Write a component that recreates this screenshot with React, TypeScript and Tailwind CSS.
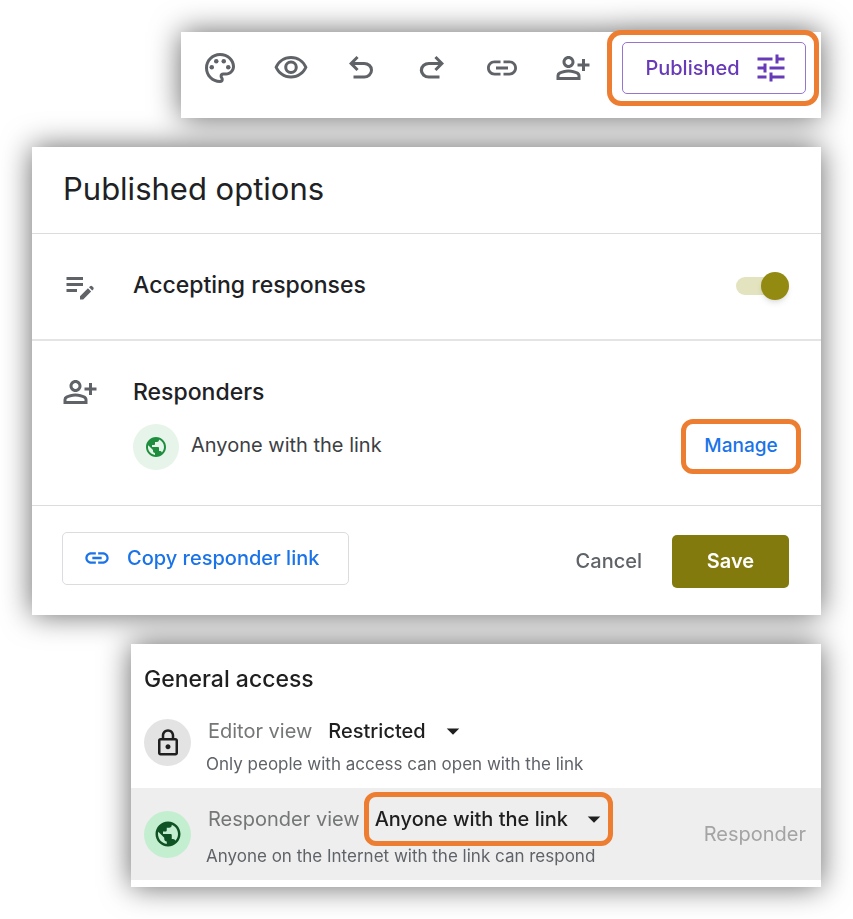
import { useState } from 'react';
import type { ReactNode } from 'react';
import {
  MdArrowDropDown,
  MdEditNote,
  MdLink,
  MdOutlineLock,
  MdOutlinePalette,
  MdOutlinePersonAddAlt,
  MdOutlineVisibility,
  MdPublic,
  MdTune,
} from 'react-icons/md';

function UndoIcon() {
  return (
    <svg viewBox="0 -960 960 960" className="size-9 fill-current">
      <path d="M280-200v-80h284q63 0 109.5-40T720-420q0-60-46.5-100T564-560H312l104 104-56 56-200-200 200-200 56 56-104 104h252q97 0 169.5 63T800-420q0 94-72.5 157T564-200H280Z" />
    </svg>
  );
}

function RedoIcon() {
  return (
    <svg viewBox="0 -960 960 960" className="size-9 fill-current">
      <path d="M396-200q-97 0-169.5-63T154-420q0-94 72.5-157T396-640h252L544-744l56-56 200 200-200 200-56-56 104-104H396q-63 0-109.5 40T240-420q0 60 46.5 100T396-280h284v80H396Z" />
    </svg>
  );
}

const tools = [
  { label: 'Customize theme', icon: <MdOutlinePalette className="size-9" /> },
  { label: 'Preview', icon: <MdOutlineVisibility className="size-9" /> },
  { label: 'Undo', icon: <UndoIcon /> },
  { label: 'Redo', icon: <RedoIcon /> },
  { label: 'Copy responder link', icon: <MdLink className="size-9" /> },
  { label: 'Share', icon: <MdOutlinePersonAddAlt className="size-9" /> },
];

function Highlight({ className = '', children }: { className?: string; children: ReactNode }) {
  return <div className={`shrink-0 border-5 border-[#ed7d31] ${className}`}>{children}</div>;
}

function Toolbar() {
  return (
    <header className="ml-[149px] bg-white pb-[14px]">
      <div className="flex h-[72px] items-center pl-[21px] pr-0.5">
        <div className="mr-4 flex flex-1 items-center justify-between text-[#5f6368]">
          {tools.map((tool) => (
            <button key={tool.label} aria-label={tool.label}>
              {tool.icon}
            </button>
          ))}
        </div>
        <Highlight className="rounded-[14px] py-[7px] pl-2.5 pr-2">
          <button className="flex h-[52px] w-[184px] items-center justify-center gap-[13px] rounded-[5px] border border-[#9575cd] pl-1.5 text-xl font-medium text-[#673ab7]">
            Published
            <MdTune className="size-9" />
          </button>
        </Highlight>
      </div>
    </header>
  );
}

function PublishedOptions() {
  const [accepting, setAccepting] = useState(true);

  return (
    <section className="bg-white">
      <h1 className="border-b border-[#dadce0] px-[31px] pb-6 pt-[22px] text-[31px] leading-10 text-[#202124]">
        Published options
      </h1>

      <div className="flex h-[107px] items-center border-b-2 border-[#e4e4e4] pb-0.5 pl-[30px] pr-8">
        <MdEditNote className="mr-[35px] size-9 text-[#5f6368]" />
        <label htmlFor="accepting" className="flex-1 text-[23px] font-medium text-[#202124]">
          Accepting responses
        </label>
        <input
          id="accepting"
          type="checkbox"
          role="switch"
          checked={accepting}
          onChange={(e) => setAccepting(e.target.checked)}
          className="relative h-[18px] w-[53px] appearance-none rounded-full bg-gray-300 before:absolute before:-top-[5px] before:left-0 before:size-7 before:rounded-full before:bg-gray-500 before:shadow-md checked:bg-[#e4e3bf] checked:before:left-[25px] checked:before:bg-[#938a12]"
        />
      </div>

      <div className="flex border-b border-[#dadce0] pb-[31px] pl-[30px] pr-5 pt-[33px]">
        <MdOutlinePersonAddAlt className="mr-[35px] size-9 text-[#5f6368]" />
        <div className="flex-1">
          <h2 className="text-[23px] font-medium leading-9 text-[#202124]">Responders</h2>
          <div className="mt-[9px] flex items-center">
            <span className="mr-3 flex size-[46px] items-center justify-center rounded-full bg-[#e6f4ea] text-[#1e8e3e]">
              <MdPublic className="size-6" />
            </span>
            <span className="flex-1 pb-1 text-xl text-[#3c4043]">Anyone with the link</span>
            <Highlight className="rounded-xl">
              <button className="h-[45px] w-[110px] text-[19px] font-medium text-[#1a73e8]">Manage</button>
            </Highlight>
          </div>
        </div>
      </div>

      <footer className="flex justify-between pb-[27px] pl-[30px] pr-8 pt-[26px]">
        <button className="mb-[3px] flex h-[53px] w-[287px] items-center gap-4 rounded-[5px] border border-[#dadce0] pb-0.5 pl-5 text-xl font-medium text-[#1a73e8]">
          <MdLink className="size-7" />
          Copy responder link
        </button>
        <div className="mt-[3px] flex gap-[30px] text-xl font-medium">
          <button className="pb-0.5 text-[#5f6368]">Cancel</button>
          <button className="h-[53px] w-[117px] rounded-[5px] bg-[#827a0c] pb-0.5 font-semibold text-white">Save</button>
        </div>
      </footer>
    </section>
  );
}

interface AccessSelectProps {
  id: string;
  value: string;
  options: string[];
  className: string;
}

function AccessSelect({ id, value, options, className }: AccessSelectProps) {
  return (
    <div className={`relative text-[#1f1f1f] ${className}`}>
      <select id={id} defaultValue={value} className="size-full appearance-none text-xl font-medium">
        {options.map((option) => (
          <option key={option}>{option}</option>
        ))}
      </select>
      <MdArrowDropDown className="pointer-events-none absolute inset-y-0 -right-2 my-auto size-[30px]" />
    </div>
  );
}

function GeneralAccess() {
  const options = ['Restricted', 'Anyone with the link'];

  return (
    <section className="ml-[99px] bg-white pb-[7px]">
      <h2 className="px-[13px] pb-3 pt-[17px] text-[23px] font-medium leading-9 text-[#1f1f1f]">General access</h2>

      <div className="flex h-[79px] pl-[13px]">
        <span className="mr-[15px] mt-2.5 flex size-[47px] items-center justify-center rounded-full bg-[#e3e3e3] text-[#1f1f1f]">
          <MdOutlineLock className="size-[30px]" />
        </span>
        <div>
          <div className="flex h-[43px] items-center gap-4 pl-0.5">
            <label htmlFor="editor" className="text-xl text-[#747775]">
              Editor view
            </label>
            <AccessSelect id="editor" value="Restricted" options={options} className="h-9 w-[132px]" />
          </div>
          <p className="text-[17px] leading-6 text-[#5f6368]">Only people with access can open with the link</p>
        </div>
      </div>

      <div className="flex h-[92px] items-center bg-[#eeeeee] pl-[13px] pr-[15px]">
        <span className="mr-[15px] flex size-[47px] items-center justify-center rounded-full bg-[#c4eed0] text-[#0f5223]">
          <MdPublic className="size-[30px]" />
        </span>
        <div className="flex-1 pb-2">
          <div className="flex items-center gap-1 pl-0.5">
            <label htmlFor="responder" className="text-xl text-[#747775]">
              Responder view
            </label>
            <Highlight className="rounded-xl pl-1.5 pr-[7px]">
              <AccessSelect
                id="responder"
                value="Anyone with the link"
                options={options}
                className="h-[44px] w-[226px]"
              />
            </Highlight>
          </div>
          <p className="-mt-0.5 text-[17px] leading-6 text-[#5f6368]">Anyone on the Internet with the link can respond</p>
        </div>
        <span className="text-xl text-[#a4a4a4]">Responder</span>
      </div>
    </section>
  );
}

export default function App() {
  return (
    <div className="overflow-hidden bg-white">
      <main className="flex flex-col gap-[29px] p-8 font-[Inter,sans-serif] drop-shadow-[0_0_15px_rgba(0,0,0,0.6)]">
        <Toolbar />
        <PublishedOptions />
        <GeneralAccess />
      </main>
    </div>
  );
}
